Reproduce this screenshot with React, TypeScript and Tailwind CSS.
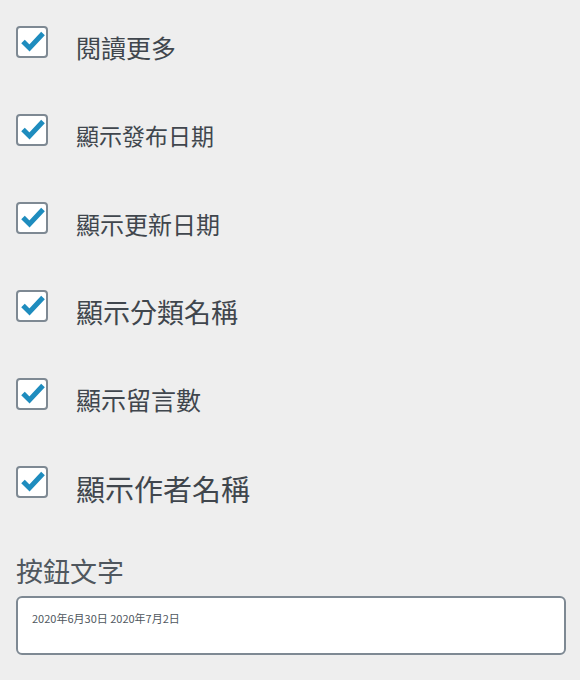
const options = [
  { label: '閱讀更多', size: 'text-[25px] leading-[25px]', offset: 'mt-[9px]' },
  { label: '顯示發布日期', size: 'text-[23px] leading-[23px]', offset: 'mt-[10px]' },
  { label: '顯示更新日期', size: 'text-[24px] leading-[24px]', offset: 'mt-[10px]' },
  { label: '顯示分類名稱', size: 'text-[27px] leading-[27px]', offset: 'mt-[8px]' },
  { label: '顯示留言數', size: 'text-[25px] leading-[25px]', offset: 'mt-[9px]' },
  { label: '顯示作者名稱', size: 'text-[29px] leading-[29px]', offset: 'mt-[8px]' },
];

function CheckBox() {
  return (
    <span className="flex h-8 w-8 shrink-0 items-center justify-center rounded-[4px] border-2 border-[#7e8993] bg-white">
      <svg viewBox="0 0 28 28" className="h-7 w-7">
        <path d="M5 13.5l6.5 6.5L25 5.5" fill="none" stroke="#1e8cbe" strokeWidth="5" />
      </svg>
    </span>
  );
}

export default function App() {
  return (
    <div
      className="min-h-screen w-[580px] bg-[#eeeeee] px-4 pt-[26px] text-[#40464d]"
      style={{ fontFamily: '"Noto Sans CJK TC", "Noto Sans", sans-serif' }}
    >
      {options.map((opt) => (
        <label key={opt.label} className="flex h-[88px] items-start">
          <CheckBox />
          <span className={`ml-[28px] ${opt.size} ${opt.offset}`}>{opt.label}</span>
        </label>
      ))}

      {/* Button text field */}
      <div className="mt-[3px]">
        <div className="text-[27px] leading-[27px] text-[#50575e]">按鈕文字</div>
        <div className="mt-[12px] h-[59px] w-[550px] rounded-[6px] border-2 border-[#7e8993] bg-white px-[14px] pt-[13px] text-[11px] leading-[14px] text-[#50575e]">
          2020年6月30日 2020年7月2日
        </div>
      </div>
    </div>
  );
}
